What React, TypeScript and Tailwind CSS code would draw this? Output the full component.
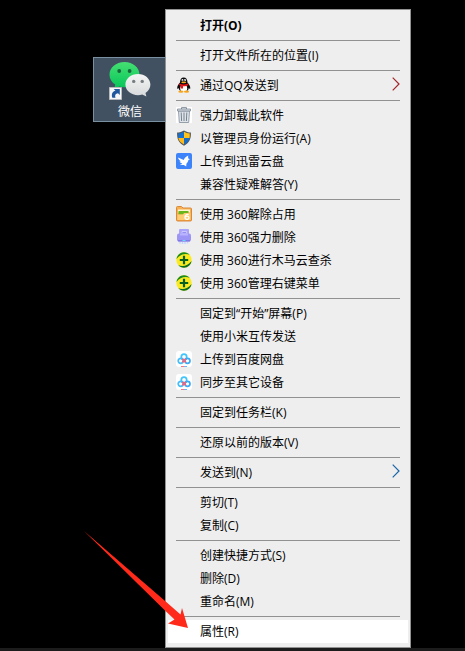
import type { ReactNode } from "react";

type MenuItem = {
  label: string;
  icon?: ReactNode;
  bold?: boolean;
  submenu?: "red" | "blue";
  active?: boolean;
};

function QQIcon() {
  return (
    <svg viewBox="0 0 16 16" className="size-4">
      <path d="M4 5.5C4 2.2 5.4.4 7.7.4s3.8 1.8 3.8 5.1c1.4 1.6 3 3.7 2.8 5.9-.5.9-1.2.1-1.5-.5-.2 1.3-.8 2.2-1.5 2.9H4.2c-.7-.7-1.3-1.6-1.5-2.9-.4.6-1 1.400-1.500.5C1 9.200 2.500 7 4 5.500z" fill="#0b0b0d" />
      <ellipse cx="7.7" cy="11.4" rx="3.5" ry="3.3" fill="#fff" />
      <ellipse cx="6.5" cy="3.1" rx=".9" ry="1.2" fill="#fff" />
      <ellipse cx="9" cy="3.1" rx=".9" ry="1.2" fill="#fff" />
      <circle cx="6.8" cy="3.3" r=".4" />
      <circle cx="8.7" cy="3.3" r=".4" />
      <ellipse cx="7.7" cy="5.3" rx="2.5" ry=".9" fill="#f9a51a" />
      <path d="M3.5 6.5c2.5 1.4 6 1.4 8.5 0l.5 1.5c-1.7 1-3.7 1.3-5.5 1.2v2.2H4.7V8.8L3 8z" fill="#e8141c" />
      <ellipse cx="4.9" cy="14.7" rx="2.6" ry="1.1" fill="#f9a51a" />
      <ellipse cx="10.5" cy="14.7" rx="2.6" ry="1.1" fill="#f9a51a" />
    </svg>
  );
}

function TrashIcon() {
  return (
    <svg viewBox="0 0 16 16" className="size-4">
      <path d="M0 0h16v16H0z" fill="#fff" />
      <path d="M2.5 4h11l-.8 11.5H3.3z" fill="#dfe4ea" stroke="#8a95a1" strokeWidth=".9" />
      <path d="M5.2 5.5l.4 8.5M8 5.5V14M10.8 5.5l-.4 8.5" stroke="#75818d" />
      <path d="M5.5 2V.7h5V2" fill="none" stroke="#788492" />
      <path d="M1.5 2h13v2h-13z" fill="#d3d9e0" stroke="#808c98" strokeWidth=".8" />
    </svg>
  );
}

function ShieldIcon() {
  return (
    <svg viewBox="0 0 16 16" className="size-4">
      <path d="M8 .4c2 1.3 4.500 2 6.900 2.100.2 6-1.200 10.300-6.900 13.200C2.300 12.800.9 8.500 1.100 2.500 3.500 2.400 6 1.700 8 .4z" fill="#50575d" />
      <path d="M8 1.800v6.300H2.400c-.2-1.400-.2-3-.1-4.500C4.400 3.300 6.400 2.700 8 1.800z" fill="#1570cf" />
      <path d="M8 1.800v6.300h5.600c.2-1.400.2-3 .1-4.500-2.100-.3-4.100-.9-5.700-1.800z" fill="#ffc31b" />
      <path d="M8 8.100H2.400c.5 2.800 2.200 4.800 5.600 6.400z" fill="#ffb91b" />
      <path d="M8 8.100h5.600c-.5 2.800-2.200 4.800-5.600 6.400z" fill="#166bc4" />
    </svg>
  );
}

function XunleiIcon() {
  return (
    <svg viewBox="0 0 16 16" className="size-4">
      <rect width="16" height="16" rx="2" fill="#3d83fa" />
      <path d="M2 4.500l5.700 2.600c.6-1.900 2.100-3.500 4.600-4.600-.3 1.200-.3 2 0 2.900l1.700.8-1.600.9c-.3 1.600-1 2.800-2 3.700l-.2 2.700-2.300-1.600c-1.500.3-2.900.1-4.100-.6 1.100-.1 1.900-.4 2.500-.9-1.400-.3-2.300-.9-2.800-1.900l1.400-.1C3.400 7.400 2.500 6.200 2 4.500z" fill="#fff" />
    </svg>
  );
}

function FolderIcon() {
  return (
    <svg viewBox="0 0 16 16" className="size-4">
      <path d="M.5 1.500q0-1 1-1h4l1.500 1.500h7.500q1 0 1 1v11q0 1-1 1h-13q-1 0-1-1z" fill="#f7b052" stroke="#d9893c" />
      <path d="M2 3.500h12v3H2z" fill="#fff5cf" />
      <path d="M2.500 5h10v3.500h-10z" fill="#68b51c" />
      <path d="M1.500 8.500h5.500l1-1.500h6.500v7.500h-13z" fill="#ffce74" />
      <path d="M12.700 8.700c-1.900-1-3.700.2-3.700 2.500 0 2.800 3.900 2.700 3.900.5 0-2-2.600-2-3.600-.5" fill="none" stroke="#fff" strokeWidth="1.300" />
      <path d="M1 14.500h14" stroke="#e8943d" />
    </svg>
  );
}

function ShredderIcon() {
  return (
    <svg viewBox="0 0 16 16" className="size-4">
      <rect x="3" y="0" width="10" height="8" rx="1" fill="#aaa5fb" />
      <path d="M6 2.500h4.500v2H6z" fill="#968ff3" stroke="#d6d2ff" strokeWidth=".8" />
      <rect x="1" y="4.500" width="14" height="8" rx="2" fill="#9c95f6" />
      <path d="M4 4.500h8v2H4z" fill="#b9b4ff" />
      <path d="M2 11h12v1.500H2z" fill="#8178e6" />
      <path d="M6.500 11h3v1h-3z" fill="#60dcfa" />
      <path d="M4 13v1.500M6.500 13v2M9 13v2M11.500 13v1.500" stroke="#c5d5ff" strokeWidth="1.500" />
    </svg>
  );
}

function Icon360() {
  return (
    <svg viewBox="0 0 16 16" className="size-4">
      <circle cx="8" cy="8" r="7.700" fill="#fbea20" />
      <path d="M.5 7C1 3.200 4.200.3 8 .3c2.300 0 4.300.9 5.700 2.500C9 .9 4 2.300.5 7z" fill="#178a22" />
      <path d="M15.500 9c-.5 3.800-3.700 6.700-7.500 6.700-2.300 0-4.300-.9-5.700-2.500C7 15.100 12 13.700 15.500 9z" fill="#086b24" />
      <path d="M8 3.800v8.400M3.800 8h8.400" stroke="#08601d" strokeWidth="2.200" />
    </svg>
  );
}

function BaiduIcon() {
  return (
    <svg viewBox="0 0 16 16" className="size-4">
      <rect width="16" height="16" rx="3" fill="#fff" />
      <g fill="none" strokeWidth="1.700">
        <circle cx="8" cy="5.900" r="2.700" stroke="#41c4fb" />
        <circle cx="4.700" cy="9.800" r="2.500" stroke="#45bdfa" />
        <circle cx="11.500" cy="9.800" r="2.500" stroke="#3daaf6" />
        <path d="M6.300 7.900l3.500 3.500M9.900 7.900l-3.500 3.500" stroke="#f0647d" strokeWidth="1.500" />
      </g>
      <path d="M5 15.500h3" stroke="#f47784" />
      <path d="M8 15.500h3" stroke="#65b9fb" />
    </svg>
  );
}

function WeChatLogo() {
  return (
    <svg viewBox="0 0 42 38" className="h-[38px] w-[42px]">
      <defs>
        <linearGradient id="green" x1="0" y1="0" x2="0" y2="1">
          <stop stopColor="#45df72" />
          <stop offset="1" stopColor="#04c558" />
        </linearGradient>
        <linearGradient id="grey" x1="0" y1="0" x2="0" y2="1">
          <stop stopColor="#f4f4f4" />
          <stop offset="1" stopColor="#d7d9da" />
        </linearGradient>
      </defs>
      <path d="M15.500 0C7 0 .5 5.600.5 12.700c0 4 2.200 7.600 5.800 9.900l-1 4.400 5-2.500c1.600.5 3.400.7 5.200.7 8.400 0 15-5.500 15-12.500S24 0 15.500 0z" fill="url(#green)" />
      <circle cx="10.200" cy="9" r="1.900" fill="#16653b" />
      <circle cx="20.600" cy="9" r="1.900" fill="#16653b" />
      <path d="M29 12c-7 0-12.600 4.700-12.600 10.600S22 33.200 29 33.200c1.500 0 2.900-.2 4.200-.6l4.200 2-.9-3.700c3-1.900 4.900-4.900 4.900-8.300C41.400 16.700 36 12 29 12z" fill="url(#grey)" />
      <circle cx="24.700" cy="19.400" r="1.700" fill="#777d81" />
      <circle cx="33.200" cy="19.400" r="1.700" fill="#777d81" />
      <path d="M.5 25.500h12v12H.5z" fill="#f7f7f7" stroke="#b6babd" />
      <path d="M3.300 35.800c-1.200-3.900.3-6.400 3.200-7L4.700 27h6.100v6.100L9 31.300c-2.700.4-3.400 2-2.500 4.500z" fill="#20589d" />
    </svg>
  );
}

const groups: MenuItem[][] = [
  [{ label: "打开(O)", bold: true }],
  [{ label: "打开文件所在的位置(I)" }],
  [{ label: "通过QQ发送到", icon: <QQIcon />, submenu: "red" }],
  [
    { label: "强力卸载此软件", icon: <TrashIcon /> },
    { label: "以管理员身份运行(A)", icon: <ShieldIcon /> },
    { label: "上传到迅雷云盘", icon: <XunleiIcon /> },
    { label: "兼容性疑难解答(Y)" },
  ],
  [
    { label: "使用 360解除占用", icon: <FolderIcon /> },
    { label: "使用 360强力删除", icon: <ShredderIcon /> },
    { label: "使用 360进行木马云查杀", icon: <Icon360 /> },
    { label: "使用 360管理右键菜单", icon: <Icon360 /> },
  ],
  [
    { label: "固定到“开始”屏幕(P)" },
    { label: "使用小米互传发送" },
    { label: "上传到百度网盘", icon: <BaiduIcon /> },
    { label: "同步至其它设备", icon: <BaiduIcon /> },
  ],
  [{ label: "固定到任务栏(K)" }],
  [{ label: "还原以前的版本(V)" }],
  [{ label: "发送到(N)", submenu: "blue" }],
  [{ label: "剪切(T)" }, { label: "复制(C)" }],
  [{ label: "创建快捷方式(S)" }, { label: "删除(D)" }, { label: "重命名(M)" }],
  [{ label: "属性(R)", active: true }],
];

function MenuRow({ item }: { item: MenuItem }) {
  return (
    <button
      type="button"
      role="menuitem"
      className={`flex h-[23px] w-full items-start gap-2 px-2 pt-[3px] text-left text-xs/[18px] whitespace-nowrap text-black hover:bg-white ${
        item.active ? "bg-white" : ""
      } ${item.bold ? "font-bold" : ""}`}
    >
      <span className="size-4 shrink-0">{item.icon}</span>
      <span className="grow">{item.label}</span>
      {item.submenu && (
        <svg
          viewBox="0 0 8 14"
          className={`h-3.5 w-2 ${item.submenu === "red" ? "text-[#a3262b]" : "text-[#1a66a8]"}`}
        >
          <path d="M.7.7L7 7 .7 13.300" fill="none" stroke="currentColor" strokeWidth="1.200" />
        </svg>
      )}
    </button>
  );
}

export default function App() {
  return (
    <div className="relative flex min-h-screen flex-col bg-black font-['Open_Sans','Noto_Sans_CJK_SC',sans-serif]">
      <main className="flex grow items-start pt-[9px] pl-[93px]">
        {/* Desktop shortcut */}
        <button
          type="button"
          className="mt-12 flex h-[65px] w-[72px] shrink-0 flex-col items-center gap-1 border border-r-0 border-[#7890a2] bg-[#415161] pt-1 pl-px text-xs text-white"
        >
          <WeChatLogo />
          <span>微信</span>
        </button>

        {/* Context menu */}
        <div role="menu" className="w-[246px] shrink-0 border border-[#929292] bg-[#eeeeee] px-0.5 py-1">
          {groups.map((group, i) => (
            <div key={i}>
              {i > 0 && <hr className="mx-2 my-[3px] border-[#919191]" />}
              {group.map((item) => (
                <MenuRow key={item.label} item={item} />
              ))}
            </div>
          ))}
        </div>
      </main>
      <footer className="h-[3px] bg-[#1c1c1c]" />

      {/* Pointer to the last entry */}
      <svg viewBox="0 0 105 98" className="pointer-events-none absolute top-[531px] left-[84px] h-[98px] w-[105px]">
        <path d="M0 0L81.700 70.500L96.500 83.500L98 77L104 97L84 92.500L90.500 88.500L81 79.500z" fill="#ff2a1a" />
      </svg>
    </div>
  );
}
